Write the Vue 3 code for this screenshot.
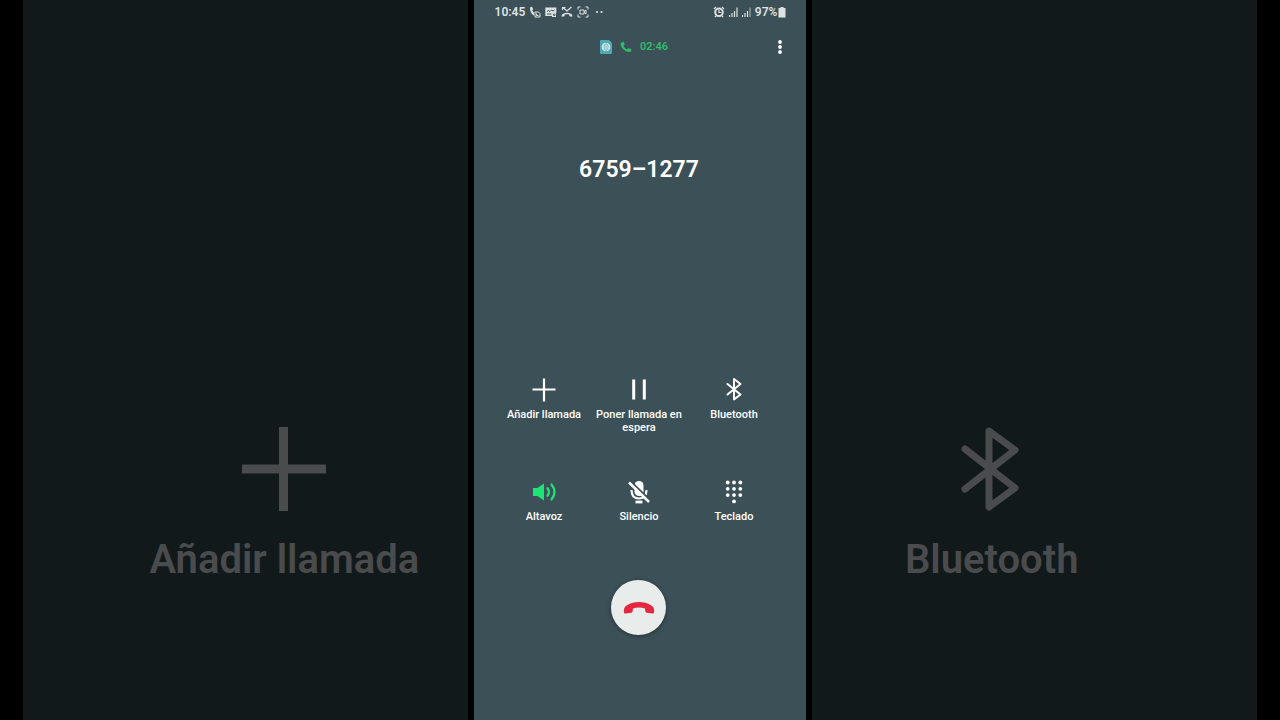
<template>
  <div class="stage">
    <div class="side side--left" aria-hidden="true">
      <div class="ghost">
        <svg class="ghost__icon" viewBox="0 0 84 84"><path d="M41.5 0v84M0 42h84" fill="none" stroke="currentColor" stroke-width="9"/></svg>
        <span class="ghost__label">Añadir llamada</span>
      </div>
    </div>

    <main class="phone">
      <header class="status">
        <div class="status__group">
          <span class="status__text">10:45</span>
          <svg class="status__icon" viewBox="0 0 12 12">
            <path d="M1.200 1.200l1.800-.5 1.200 2.300-1 1.200c.4 1 1 1.800 1.800 2.500V9.500C2.500 8 .5 4.800 1.200 1.200z" fill="currentColor"/>
            <path d="M6 6h3.500l1.500 1.500v3.500h-5zM7.500 7.500v2h2" fill="none" stroke="currentColor"/>
          </svg>
          <svg class="status__icon" viewBox="0 0 12 12">
            <path d="M.3 1.500h11v5.500H11v4H7V10H.3z" fill="currentColor"/>
            <path d="M2 5.500l1.500-1 1.500 1 1.500-1.500 1.500 1 1.500-1M2 8h4.500" fill="none" stroke="#3c5057"/>
            <path d="M8.500 8h1.500v1.500H8.500z" fill="none" stroke="#3c5057" stroke-width=".8"/>
          </svg>
          <svg class="status__icon" viewBox="0 0 12 12">
            <path d="M2 1.500l4 3.500 4.500-4M1.500 1v3M1.500 1.500h3" fill="none" stroke="currentColor" stroke-width="1.200"/>
            <path d="M.8 10.800c-.4-1 0-2.100 1-2.800 2.600-1.700 5.800-1.700 8.400 0 1 .7 1.400 1.800 1 2.800l-2.700-.6-.3-1.700c-1.400-.5-3-.5-4.400 0l-.3 1.700z" fill="currentColor"/>
          </svg>
          <svg class="status__icon" viewBox="0 0 12 12">
            <path d="M1 3.500V1h2.500M8.500 1H11v2.500M11 8.500V11H8.500M3.500 11H1V8.500M3 4h4v4H3zM7 5.500L9 4v4L7 6.500" fill="none" stroke="currentColor"/>
          </svg>
          <svg class="status__icon" viewBox="0 0 12 12"><circle cx="4" cy="6" r="1.100" fill="currentColor"/><circle cx="8.500" cy="6" r="1.100" fill="currentColor"/></svg>
        </div>
        <div class="status__group">
          <svg class="status__icon" viewBox="0 0 12 12">
            <circle cx="6" cy="6.300" r="3.800" fill="none" stroke="currentColor" stroke-width="2"/>
            <path d="M6 4v2.500h2M1 3l2-2M11 3L9 1M3 10l-1.200 1.200M9 10l1.200 1.200" fill="none" stroke="currentColor" stroke-width="1.200"/>
          </svg>
          <svg v-for="n in 2" :key="n" class="status__icon status__icon--signal" viewBox="0 0 9 12">
            <path d="M.5 9v2M3 7v4M5.500 5v6" stroke="currentColor" stroke-width="1.200"/>
            <path d="M8 1.500V11" stroke="currentColor" stroke-width="1.200" :opacity="n === 2 ? 0.6 : 1"/>
          </svg>
          <span class="status__battery">
            <span class="status__text">97%</span>
            <svg width="8" height="12" viewBox="0 0 8 12"><path d="M2.500 1h3v1H7.500v9.500h-7V2h2z" fill="currentColor"/></svg>
          </span>
        </div>
      </header>

      <div class="callbar">
        <div class="callbar__info">
          <svg width="12" height="14" viewBox="0 0 12 14">
            <path d="M1 0h8l3 3v10a1 1 0 0 1-1 1H1a1 1 0 0 1-1-1V1a1 1 0 0 1 1-1z" fill="#4fa8b2"/>
            <circle cx="6" cy="7" r="4.300" fill="#e6f6f6"/>
            <path d="M2 7h8M6 3v8M2.800 5h6.400M2.800 9h6.400M6 3c-2.600 2.500-2.600 5.500 0 8M6 3c2.600 2.500 2.600 5.500 0 8" fill="none" stroke="#4fa8b2" stroke-width=".5"/>
          </svg>
          <svg width="12" height="12" viewBox="0 0 12 12"><path d="M1.200 1.700L3 .8c.4-.1.600 0 .7.300l.9 2c.1.300 0 .6-.2.800l-1 .9c.8 1.600 2 2.800 3.600 3.600l1-1c.2-.2.500-.3.800-.2l2.200.9c.3.100.4.400.3.800l-.7 1.500c-.2.500-.6.700-1.100.7C4.700 10.800.6 6.800.6 2.800c0-.5.2-.9.600-1.100z" fill="#2ebd6b"/></svg>
          <time class="callbar__time">{{ duration }}</time>
        </div>
        <button class="callbar__more" aria-label="Más opciones">
          <svg width="4" height="14" viewBox="0 0 4 14"><g fill="#fff"><circle cx="2" cy="2" r="1.900"/><circle cx="2" cy="7" r="1.900"/><circle cx="2" cy="12" r="1.900"/></g></svg>
        </button>
      </div>

      <h1 class="number">{{ number }}</h1>

      <div class="actions">
        <button
          v-for="action in actions"
          :key="action.id"
          class="action"
          :class="{ 'action--on': action.id === 'speaker' && speakerOn }"
          @click="press(action.id)"
        >
          <svg class="action__icon" viewBox="0 0 24 24">
            <path v-if="action.id === 'add'" d="M12 .5v23M.5 11.500h23" fill="none" stroke="currentColor" stroke-width="2.200"/>
            <path v-else-if="action.id === 'hold'" d="M6.700 1.500v20M17.300 1.500v20" fill="none" stroke="currentColor" stroke-width="3"/>
            <path v-else-if="action.id === 'bluetooth'" d="M5.500 6l13 10.500-6.500 5V1l6.500 5-13 10.500" fill="none" stroke="currentColor" stroke-width="2" stroke-linejoin="round" stroke-linecap="round"/>
            <g v-else-if="action.id === 'speaker'">
              <path d="M1 8h4.500L12 3.500v17L5.500 16H1z" fill="currentColor"/>
              <path d="M15.500 8.200q3 3.800 0 7.600M19.500 4.500q6 7.500 0 15" fill="none" stroke="currentColor" stroke-width="2.200" stroke-linecap="round"/>
            </g>
            <g v-else-if="action.id === 'mute'">
              <rect x="7.500" y="1" width="9" height="15" rx="4.500" fill="currentColor"/>
              <path d="M4.500 10c0 5 2.500 8.500 7.500 8.500s7.500-3.500 7.500-8.500" fill="none" stroke="currentColor" stroke-width="2.200"/>
              <path d="M8.500 22h7" stroke="currentColor" stroke-width="2.800"/>
              <path d="M3 .8l20 19.500" stroke="#3c5057" stroke-width="2"/>
              <path d="M2 2.500l20 19.500" stroke="currentColor" stroke-width="2.500"/>
            </g>
            <g v-else fill="currentColor">
              <circle v-for="dot in dots" :key="dot.x + '-' + dot.y" :cx="dot.x" :cy="dot.y" r="1.900"/>
            </g>
          </svg>
          <span class="action__label">{{ action.label }}</span>
        </button>
      </div>

      <button class="hangup" aria-label="Finalizar llamada">
        <svg width="32" height="14" viewBox="0 0 32 14"><path d="M1 11.500C.5 8.200 1.300 6 4 4.300 11-.1 21-.1 28 4.300c2.700 1.700 3.500 3.900 3 7.200-.1.800-.7 1.200-1.500 1.100l-5.900-.8c-.7-.1-1.100-.5-1.200-1.200L22 7.500c-3.700-1.300-8.300-1.300-12 0l-.4 3.100c-.1.700-.5 1.100-1.200 1.200l-5.900.8c-.8.1-1.400-.3-1.500-1.100z" fill="#e2293f"/></svg>
      </button>
    </main>

    <div class="side side--right" aria-hidden="true">
      <div class="ghost">
        <svg class="ghost__icon" viewBox="0 0 84 84"><path d="M15 22l50 39-26 19V4l26 19L15 62" fill="none" stroke="currentColor" stroke-width="7" stroke-linejoin="round" stroke-linecap="round"/></svg>
        <span class="ghost__label">Bluetooth</span>
      </div>
    </div>
  </div>
</template>

<script setup>
import { ref } from 'vue'

const duration = ref('02:46')
const number = ref('6759–1277')
const speakerOn = ref(true)

const actions = [
  { id: 'add', label: 'Añadir llamada' },
  { id: 'hold', label: 'Poner llamada en espera' },
  { id: 'bluetooth', label: 'Bluetooth' },
  { id: 'speaker', label: 'Altavoz' },
  { id: 'mute', label: 'Silencio' },
  { id: 'keypad', label: 'Teclado' }
]

// three rows of three keys and the zero below
const dots = [2.5, 8.8, 15.1].flatMap(y => [5.7, 12, 18.3].map(x => ({ x, y })))
dots.push({ x: 12, y: 21.4 })

function press(id) {
  if (id === 'speaker') {
    speakerOn.value = !speakerOn.value
  }
}
</script>

<style>
body {
  margin: 0;
  background: #000;
}
</style>

<style scoped>
.stage {
  display: grid;
  grid-template-columns: 1fr 26vw 1fr;
  gap: 6px;
  min-height: 100vh;
  padding: 0 23px;
  box-sizing: border-box;
  background: #000;
  font-family: Roboto, Arial, sans-serif;
}
button {
  padding: 0;
  border: none;
  background: none;
  color: inherit;
  font-family: inherit;
  cursor: pointer;
}
svg {
  display: block;
  flex-shrink: 0;
}
.side {
  display: flex;
  flex-direction: column;
  align-items: center;
  min-width: 0;
  padding-top: 427px;
  box-sizing: border-box;
  background: #11191b;
  color: #4a4b4c;
}
.side--left {
  padding-left: 78px;
}
.side--right {
  padding-right: 86px;
}
.ghost {
  display: flex;
  flex-direction: column;
  align-items: center;
  gap: 25px;
}
.ghost__icon {
  width: 84px;
  height: 84px;
}
.ghost__label {
  font-size: 40px;
  line-height: 48px;
  font-weight: 600;
  white-space: nowrap;
}
.phone {
  display: flex;
  flex-direction: column;
  align-items: center;
  min-width: 0;
  padding-right: 2px;
  background: #3c5057;
  color: #fff;
}
.status {
  display: flex;
  justify-content: space-between;
  align-self: stretch;
  height: 24px;
  padding: 0 18px 0 21px;
  color: #dde3e5;
}
.status__group {
  display: flex;
  align-items: center;
  gap: 4px;
}
.status__text {
  font-size: 12px;
  line-height: 16px;
  font-weight: 600;
}
.status__icon {
  width: 12px;
  height: 12px;
}
.status__icon--signal {
  width: 9px;
}
.status__battery {
  display: flex;
  align-items: center;
  gap: 1px;
}
.callbar {
  display: grid;
  grid-template-columns: 1fr auto 1fr;
  align-items: center;
  align-self: stretch;
  height: 46px;
  padding: 0 18px;
}
.callbar__info {
  display: flex;
  align-items: center;
  grid-column: 2;
  gap: 8px;
  margin-right: 10px;
}
.callbar__time {
  color: #2ebd6b;
  font-size: 11px;
  line-height: 16px;
  font-weight: 600;
}
.callbar__more {
  justify-self: end;
  padding: 4px;
}
.number {
  margin: 84px 0 0;
  font-size: 23px;
  line-height: 32px;
  font-weight: 600;
}
.actions {
  display: grid;
  grid-template-columns: repeat(3, 95px);
  row-gap: 46px;
  margin-top: 192px;
}
.action {
  display: flex;
  flex-direction: column;
  align-items: center;
  gap: 6px;
  min-height: 56px;
}
.action--on {
  color: #1de575;
}
.action__icon {
  width: 24px;
  height: 24px;
}
.action__label {
  color: #fff;
  font-size: 11px;
  line-height: 13px;
  font-weight: 500;
}
.hangup {
  display: flex;
  align-items: center;
  justify-content: center;
  width: 55px;
  height: 55px;
  margin-top: 44px;
  border-radius: 50%;
  background: #e8ecea;
  box-shadow: 0 1px 4px rgba(0, 0, 0, 0.4);
}
</style>
